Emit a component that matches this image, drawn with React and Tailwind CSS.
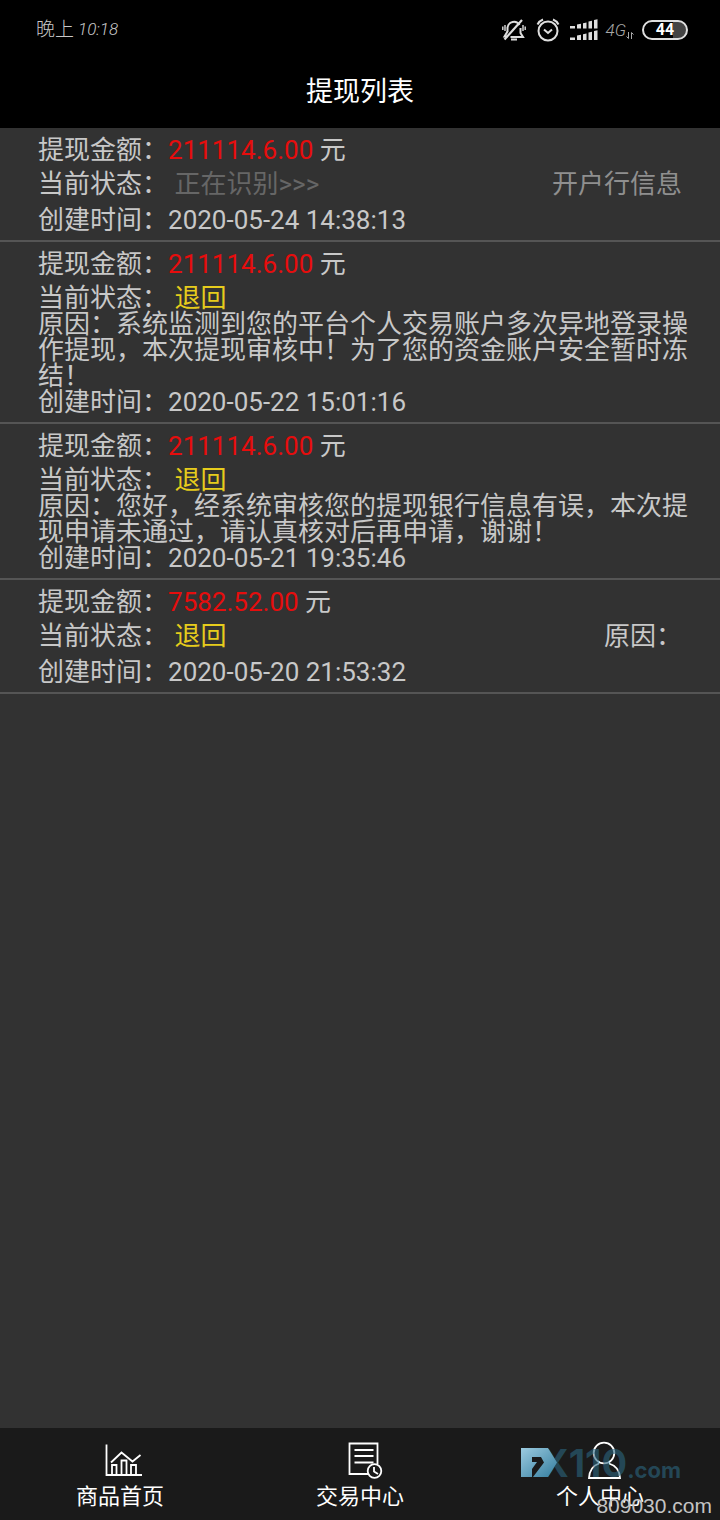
const records = [
  {
    id: 1,
    amount: "211114.6.00",
    status: "正在识别>>>",
    pending: true,
    createdAt: "2020-05-24 14:38:13",
  },
  {
    id: 2,
    amount: "211114.6.00",
    status: "退回",
    reason:
      "系统监测到您的平台个人交易账户多次异地登录操作提现，本次提现审核中！为了您的资金账户安全暂时冻结！",
    createdAt: "2020-05-22 15:01:16",
  },
  {
    id: 3,
    amount: "211114.6.00",
    status: "退回",
    reason:
      "您好，经系统审核您的提现银行信息有误，本次提现申请未通过，请认真核对后再申请，谢谢！",
    createdAt: "2020-05-21 19:35:46",
  },
  {
    id: 4,
    amount: "7582.52.00",
    status: "退回",
    reason: "",
    createdAt: "2020-05-20 21:53:32",
  },
];

const BellOffIcon = () => (
  <svg width="24" height="24" viewBox="0 0 24 24" fill="none" stroke="currentColor" strokeWidth="2">
    <path d="M5.500 14V9.500a6.500 6.500 0 0 1 12-2.500M18.500 10v5l2.500 4H8.500" />
    <path d="M5.500 13.500 2.500 18.500h3" />
    <path d="M20 2 2.500 21.500" strokeWidth="2.200" />
    <path d="M9 21.500h6" />
    <path d="M3 7v6M.8 8.500v3.500M21 7v6M23.200 8.500v3.500" strokeWidth="1.400" />
  </svg>
);

const AlarmIcon = () => (
  <svg width="24" height="24" viewBox="0 0 24 24" fill="none" stroke="currentColor" strokeWidth="2">
    <circle cx="12" cy="13" r="9.500" />
    <path d="m8 11.500 4 3.500 4-3.500" />
    <path d="M1.500 6.500A10 10 0 0 1 7 1.500M22.500 6.500A10 10 0 0 0 17 1.500" />
  </svg>
);

const SignalIcon = () => (
  <svg width="28" height="22" viewBox="0 0 28 22" fill="currentColor">
    <path d="M0 7h5v2.500H0zM7 5.500l4-.8v4.800H7zM13 4.200l3.500-.8v6.100H13zM18.500 2.500l3.500-.8v7.800h-3.500zM24 1l3.500-.8v9.300H24z" />
    <path d="M0 18.500h5V21H0zM7 16.500l4-.8V21H7zM13 15.200l3.500-.8V21H13zM18.500 13.500l3.500-.8V21h-3.500zM24 12l3.500-.8V21H24z" />
  </svg>
);

const DataArrowsIcon = () => (
  <svg width="8" height="9" viewBox="0 0 8 9" fill="none" stroke="currentColor" strokeWidth="1">
    <path d="M2.500 1v6.500L.5 5.500M5.500 8V1.500l2 2" />
  </svg>
);

const ChartIcon = () => (
  <svg className="overflow-visible" width="38" height="38" viewBox="0 0 38 38" fill="none" stroke="currentColor" strokeWidth="1.800">
    <path d="M5.500 2.500V33H41" />
    <path d="M10 20.500 20.500 10.500 31.500 19.500 39.500 13" />
    <path d="M11 33V23h4.500v10M20.500 33V18.500h5V33M30 33V23h5v10" />
  </svg>
);

const TradeIcon = () => (
  <svg className="overflow-visible" width="38" height="38" viewBox="0 0 38 38" fill="none" stroke="currentColor" strokeWidth="1.800">
    <path d="M27 32H8.500V1.500h28V22" />
    <path d="M13.500 8h19M13.500 14h19M13.500 20.500h19" />
    <circle cx="33.500" cy="29" r="6.800" fill="#1a1a1a" />
    <path d="M33 25v4.500l4 2.500" />
  </svg>
);

const UserIcon = () => (
  <svg className="overflow-visible" width="38" height="38" viewBox="0 0 38 38" fill="none" stroke="currentColor" strokeWidth="1.800">
    <circle cx="23" cy="11" r="10.300" />
    <path d="M18 21.500C12 23.500 8.500 28 8 36h31c-.5-8-4-12.500-11-14.500" />
  </svg>
);

const tabs = [
  { label: "商品首页", icon: <ChartIcon /> },
  { label: "交易中心", icon: <TradeIcon /> },
  { label: "个人中心", icon: <UserIcon /> },
];

const StatusBar = () => (
  <div className="flex h-15 items-center justify-between pl-9 pr-8 text-[#dedede]">
    <div className="flex items-center text-[19px] font-light text-[#c8c8c8]">
      <span>晚上</span>
      <span className="ml-1 text-[17px] italic">10:18</span>
    </div>
    <div className="flex items-center gap-2">
      <BellOffIcon />
      <span className="mx-0.5">
        <AlarmIcon />
      </span>
      <SignalIcon />
      <div className="flex items-end text-[#a8a8a8]">
        <span className="text-[17px] leading-5 font-light italic">4G</span>
        <DataArrowsIcon />
      </div>
      <div className="flex h-5 w-[46px] items-center justify-center rounded-full border-2 border-[#dedede] bg-linear-to-r from-black from-70% to-[#444] to-70% text-[16px] leading-4 font-bold text-white">
        44
      </div>
    </div>
  </div>
);

const RecordItem = ({ record }) => (
  <li className="border-b-2 border-[#555555] px-[38px] pt-[9px] pb-[7px]">
    <p>
      提现金额：<span className="text-[#e60d0d]">{record.amount}</span> 元
    </p>
    <div className="mt-2 flex justify-between">
      <p>
        当前状态：{" "}
        <span className={record.pending ? "text-[#666666]" : "text-[#e6cc1c]"}>
          {record.status}
        </span>
      </p>
      {record.pending && (
        <a href="#bank" className="text-[#8f8f8f]">
          开户行信息
        </a>
      )}
      {record.reason === "" && <p>原因：</p>}
    </div>
    {record.reason ? (
      <p className="-mr-2">原因：{record.reason}</p>
    ) : (
      <div className="h-2.5" />
    )}
    <p>创建时间：{record.createdAt}</p>
  </li>
);

const Watermark = () => (
  <div className="pointer-events-none absolute right-2 bottom-0">
    <div className="mr-[31px] flex items-end font-['Inter',sans-serif] font-bold text-[#2b6680]/60">
      <svg className="z-10" width="36" height="30" viewBox="0 0 36 30">
        <defs>
          <linearGradient id="logo" x1="0" y1="0" x2="1" y2="1">
            <stop offset="0" stopColor="#9ccbe0" />
            <stop offset="1" stopColor="#347e9f" />
          </linearGradient>
        </defs>
        <path
          fill="url(#logo)"
          fillRule="evenodd"
          d="M0 0h27l9 14.500L27 29H12l11-14.500L20 9h-9v5h5l-5 7v8H0z"
        />
      </svg>
      <span className="-ml-4 text-[38px] leading-[30px]">X110</span>
      <span className="text-[22px] leading-4">.com</span>
    </div>
    <p className="mt-3.5 text-right font-['Liberation_Sans',sans-serif] text-[21px] leading-7 text-[#c4c4c4]">
      809030.com
    </p>
  </div>
);

const App = () => {
  return (
    <div className="flex min-h-screen flex-col bg-[#323232] font-['Roboto','Noto_Sans_CJK_SC',sans-serif] text-[#c8c8c8]">
      <header className="bg-black">
        <StatusBar />
        <h1 className="pt-3 pb-4 text-center text-[27px] leading-10 text-white">
          提现列表
        </h1>
      </header>

      <main className="flex-1">
        <ul className="text-[26px] leading-[26px]">
          {records.map((record) => (
            <RecordItem key={record.id} record={record} />
          ))}
        </ul>
      </main>

      <nav className="relative grid grid-cols-3 bg-[#1a1a1a] text-white">
        {tabs.map((tab) => (
          <a
            key={tab.label}
            href="#tab"
            className="flex flex-col items-center pt-3.5 pb-1.5 text-[22px] leading-[34px]"
          >
            {tab.icon}
            {tab.label}
          </a>
        ))}
        <Watermark />
      </nav>
    </div>
  );
};

export default App;
